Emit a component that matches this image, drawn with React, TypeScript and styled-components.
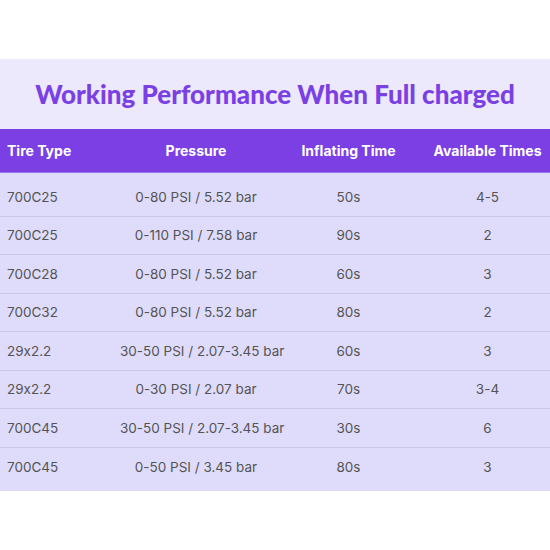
import * as React from 'react';
import styled, { createGlobalStyle } from 'styled-components';

const GlobalStyle = createGlobalStyle`
  html, body {
    margin: 0;
    padding: 0;
    background: #ffffff;
  }
`;

const Page = styled.div`
  width: 550px;
  height: 550px;
  padding-top: 59px;
  box-sizing: border-box;
  font-family: Inter, "Liberation Sans", sans-serif;
  font-feature-settings: 'calt' 0;
`;

const Panel = styled.section`
  background: #ebe9fb;
`;

const Title = styled.h1`
  margin: 0;
  height: 70px;
  display: flex;
  align-items: center;
  justify-content: center;
  font-family: Lato, Inter, sans-serif;
  font-weight: 900;
  font-size: 26px;
  color: #7b40e4;
`;

const cols = '120px 152px 153px 125px';

const HeaderRow = styled.div`
  display: grid;
  grid-template-columns: ${cols};
  height: 43px;
  align-items: center;
  background: #7b3fe4;
  border-bottom: 1px solid #9b73ec;
  color: #ffffff;
  font-weight: 700;
  font-size: 14px;
`;

const Body = styled.div`
  background: #dfdcfb;
  padding: 5px 0;
`;

const Row = styled.div<{ $last?: boolean }>`
  display: grid;
  grid-template-columns: ${cols};
  height: 38.5px;
  align-items: center;
  box-sizing: border-box;
  border-bottom: ${(p) => (p.$last ? 'none' : '1px solid #c9c6e8')};
  color: #545454;
  font-size: 13.5px;
`;

const Cell = styled.span<{ $left?: boolean }>`
  text-align: ${(p) => (p.$left ? 'left' : 'center')};
  padding-left: ${(p) => (p.$left ? '7px' : '0')};
  white-space: nowrap;
`;

const rows = [
  ['700C25', '0-80 PSI / 5.52 bar', '50s', '4-5'],
  ['700C25', '0-110 PSI / 7.58 bar', '90s', '2'],
  ['700C28', '0-80 PSI / 5.52 bar', '60s', '3'],
  ['700C32', '0-80 PSI / 5.52 bar', '80s', '2'],
  ['29x2.2', '30-50 PSI / 2.07-3.45 bar', '60s', '3'],
  ['29x2.2', '0-30 PSI / 2.07 bar', '70s', '3-4'],
  ['700C45', '30-50 PSI / 2.07-3.45 bar', '30s', '6'],
  ['700C45', '0-50 PSI / 3.45 bar', '80s', '3'],
];

const App = () => {
  return (
    <Page>
      <GlobalStyle />
      <Panel>
        <Title>Working Performance When Full charged</Title>
        <HeaderRow>
          <Cell $left>Tire Type</Cell>
          <Cell>Pressure</Cell>
          <Cell>Inflating Time</Cell>
          <Cell>Available Times</Cell>
        </HeaderRow>
        <Body>
          {rows.map((r, i) => (
            <Row key={i} $last={i === rows.length - 1}>
              <Cell $left>{r[0]}</Cell>
              <Cell>{r[1]}</Cell>
              <Cell>{r[2]}</Cell>
              <Cell>{r[3]}</Cell>
            </Row>
          ))}
        </Body>
      </Panel>
    </Page>
  );
};

export default App;
